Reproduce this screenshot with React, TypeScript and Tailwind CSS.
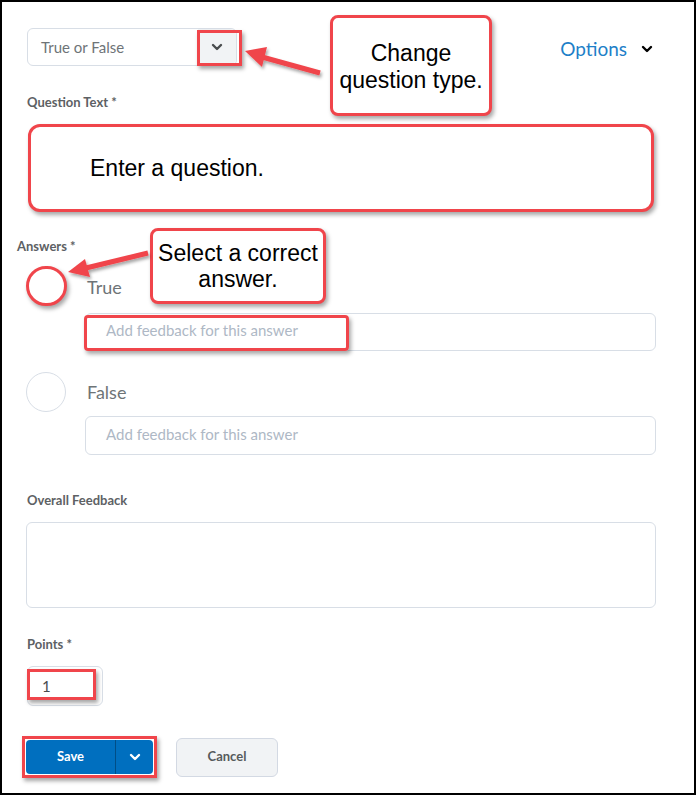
import React from 'react';

const Chevron: React.FC<{ className?: string }> = ({ className }) => (
  <svg viewBox="0 0 12 8" className={className} fill="none" stroke="currentColor" strokeWidth={2.4} strokeLinecap="round" strokeLinejoin="round">
    <path d="M2 2l4 4 4-4" />
  </svg>
);

const redBox = 'border-[3px] border-[#f0454b] shadow-[2px_3px_4px_rgba(0,0,0,0.35)]';
const arial = { fontFamily: '"Liberation Sans", Arial, sans-serif' };

const Label: React.FC<{ children: React.ReactNode; className?: string }> = ({ children, className = '' }) => (
  <div className={`text-[13px] leading-4 font-bold text-[#5d6164] ${className}`}>{children}</div>
);

const Feedback: React.FC<{ highlight?: boolean; className?: string }> = ({ highlight, className = '' }) => (
  <div className={`relative ml-[58px] w-[571px] h-[38px] rounded-md border border-[#d8dee6] flex items-center pl-5 pb-[3px] text-[15px] text-[#aeb8c5] ${className}`}>
    Add feedback for this answer
    {highlight && <div className={`absolute -left-[2px] top-[1px] w-[265px] h-[36px] rounded-sm ${redBox}`} />}
  </div>
);

export default function App() {
  return (
    <div className="relative w-[697px] h-[797px] bg-white" style={{ fontFamily: 'Lato, "Open Sans", sans-serif' }}>
      <div className="w-[696px] h-[795px] border-2 border-black pl-[25px] pr-[38px] pt-[26px]">
        {/* top row */}
        <div className="flex items-center justify-between">
          <div className="relative w-[210px] h-[38px] rounded-md border border-[#d8dee6] flex items-center">
            <span className="pl-[13px] text-[15px] text-[#6e7477] flex-1">True or False</span>
            <div className="w-[38px] h-full bg-[#f1f3f5] rounded-r-md flex items-center justify-center">
              <Chevron className="w-3 h-2 text-[#494c4e]" />
            </div>
            <div className={`absolute left-[169px] top-[1px] w-[45px] h-[36px] ${redBox}`} />
          </div>
          <div className="flex items-center gap-[14px] mt-1 mr-[3px]">
            <span className="text-[19px] text-[#1e7fc8]">Options</span>
            <Chevron className="w-3 h-2 text-black" />
          </div>
        </div>

        <Label className="mt-[28px]">Question Text *</Label>
        <div className={`mt-[14px] ml-[1px] w-[626px] h-[88px] rounded-xl bg-white flex items-center pl-[59px] ${redBox}`}>
          <span className="text-[23px] text-black" style={arial}>Enter a question.</span>
        </div>

        <Label className="mt-[26px] -ml-[10px]">Answers *</Label>
        <div className="mt-[12px] -ml-[1px] flex items-center gap-[20px]">
          <div className={`w-[41px] h-[40px] rounded-full bg-white ${redBox}`} />
          <span className="text-[18px] text-[#6e7477] mt-[3px]">True</span>
        </div>
        <Feedback highlight className="mt-[7px]" />

        <div className="mt-[21px] -ml-[1px] flex items-center gap-[21px]">
          <div className="w-[40px] h-[40px] rounded-full border border-[#d8dee6]" />
          <span className="text-[18px] text-[#6e7477]">False</span>
        </div>
        <Feedback className="mt-[4px] h-[39px]" />

        <Label className="mt-[37px]">Overall Feedback</Label>
        <div className="mt-[14px] -ml-[1px] w-[630px] h-[86px] rounded-md border border-[#d8dee6]" />

        <Label className="mt-[28px]">Points *</Label>
        <div className="relative mt-[14px] w-[76px] h-[40px] rounded-md border border-[#d8dee6] flex items-center pl-[14px] text-[15px] text-[#494c4e]">
          1
          <div className={`absolute -left-[1px] top-[2px] w-[69px] h-[31px] ${redBox}`} />
        </div>

        <div className="mt-[30px] flex items-center">
          <div className={`-ml-[5px] p-[1px] ${redBox}`}>
            <div className="flex h-[34px] w-[127px] bg-[#006fbf] rounded-sm">
              <div className="w-[89px] flex items-center justify-center text-white text-[13px] font-bold">Save</div>
              <div className="w-px bg-[#004e87]" />
              <div className="flex-1 flex items-center justify-center">
                <Chevron className="w-3 h-2 text-white" />
              </div>
            </div>
          </div>
          <div className="ml-[19px] w-[102px] h-[39px] rounded-md bg-[#f1f3f5] border border-[#d3d9e3] flex items-center justify-center text-[13px] font-bold text-[#565a5c]">
            Cancel
          </div>
        </div>
      </div>

      {/* annotation callouts */}
      <div
        className={`absolute left-[330px] top-[15px] w-[162px] h-[101px] rounded-lg bg-white flex flex-col items-center justify-center text-[23px] leading-[27px] text-black ${redBox}`}
        style={arial}
      >
        <span className="mt-[3px]">Change</span>
        <span>question type.</span>
      </div>
      <div
        className={`absolute left-[150px] top-[228px] w-[176px] h-[76px] rounded-lg bg-white flex flex-col items-center justify-center text-[23px] leading-[26px] text-black ${redBox}`}
        style={arial}
      >
        <span>Select a correct</span>
        <span>answer.</span>
      </div>

      {/* arrows */}
      <svg className="absolute left-0 top-0 pointer-events-none" width="697" height="797">
        <defs>
          <filter id="sh" x="-20%" y="-20%" width="140%" height="140%">
            <feDropShadow dx="1.5" dy="2.5" stdDeviation="1.5" floodColor="#000" floodOpacity="0.35" />
          </filter>
        </defs>
        <g filter="url(#sh)" fill="#f0454b" stroke="#f0454b">
          <line x1="262" y1="57" x2="320" y2="73" strokeWidth="5" />
          <polygon points="245,51 267,47 262,67" stroke="none" />
          <line x1="86" y1="268" x2="148" y2="253" strokeWidth="5" />
          <polygon points="68,272 85,259 90,277" stroke="none" />
        </g>
      </svg>
    </div>
  );
}
